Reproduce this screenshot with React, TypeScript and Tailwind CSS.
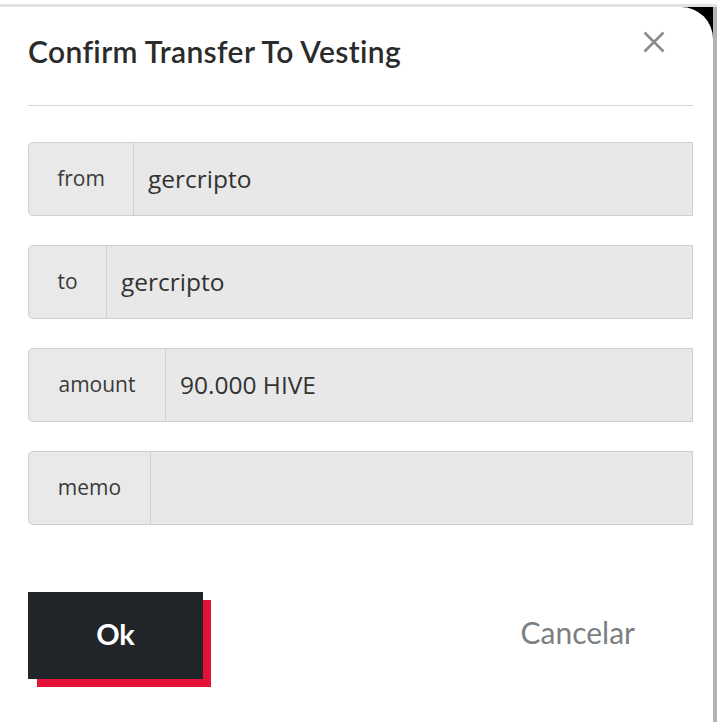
import React from "react";

function Row({ label, value, labelW }: { label: string; value: string; labelW: string }) {
  return (
    <div className="flex h-[74px] rounded-l-[5px] border border-[#cfcfcf] bg-[#e9e9e9]">
      <div
        className={`flex items-center justify-center border-r border-[#d0d0d0] text-[21px] text-[#3a3a3a] ${labelW}`}
        style={{ fontFamily: '"Open Sans", sans-serif' }}
      >
        {label}
      </div>
      <div
        className="flex flex-1 items-center bg-[#e8e8e8] pl-[14px] text-[24.5px] text-[#333]"
        style={{ fontFamily: '"Open Sans", sans-serif' }}
      >
        {value}
      </div>
    </div>
  );
}

export default function App() {
  return (
    <div className="flex h-[722px] w-[717px] flex-col bg-white">
      <div className="h-[4px] bg-white" />
      <div className="h-[3px] bg-[#e2e2e2]" />
      <div className="flex flex-1">
        <div className="flex-1 bg-black">
          <div className="relative h-full rounded-tr-[32px] bg-white pl-[28px] pr-[20px] pt-[28px]">
            <div className="flex items-start justify-between">
              <h1
                className="text-[30px] font-semibold leading-[32px] tracking-[0.35px] text-[#2b2b2b]"
                style={{ fontFamily: 'Lato, "Noto Sans", sans-serif' }}
              >
                Confirm Transfer To Vesting
              </h1>
              <svg
                className="mr-[20px] -mt-[12px]"
                width="38"
                height="38"
                viewBox="0 0 24 24"
                fill="none"
                stroke="#8a8a8a"
                strokeWidth="1.6"
                strokeLinecap="butt"
              >
                <path d="M6 6l12 12M18 6L6 18" />
              </svg>
            </div>
            <div className="mt-[38px] h-px bg-[#d5d5d5]" />
            <div className="mt-[36px] flex flex-col gap-[29px]">
              <Row label="from" value="gercripto" labelW="w-[105px]" />
              <Row label="to" value="gercripto" labelW="w-[78px]" />
              <Row label="amount" value="90.000 HIVE" labelW="w-[137px]" />
              <Row label="memo" value="" labelW="w-[122px]" />
            </div>
            <div className="mt-[67px] flex items-center justify-between">
              <div className="relative h-[87px] w-[175px]">
                <div className="absolute left-[9px] top-[8px] h-[87px] w-[174px] bg-[#e31337]" />
                <button
                  className="absolute inset-0 flex items-center justify-center bg-[#212529] pb-[4px] text-[29px] font-bold text-white"
                  style={{ fontFamily: 'Lato, "Noto Sans", sans-serif' }}
                >
                  Ok
                </button>
              </div>
              <span
                className="mr-[58px] pb-[6px] text-[30px] text-[#7b7f83]"
                style={{ fontFamily: 'Lato, "Noto Sans", sans-serif' }}
              >
                Cancelar
              </span>
            </div>
          </div>
        </div>
        <div className="w-[4px] bg-[#b3b3b3]" />
      </div>
    </div>
  );
}
